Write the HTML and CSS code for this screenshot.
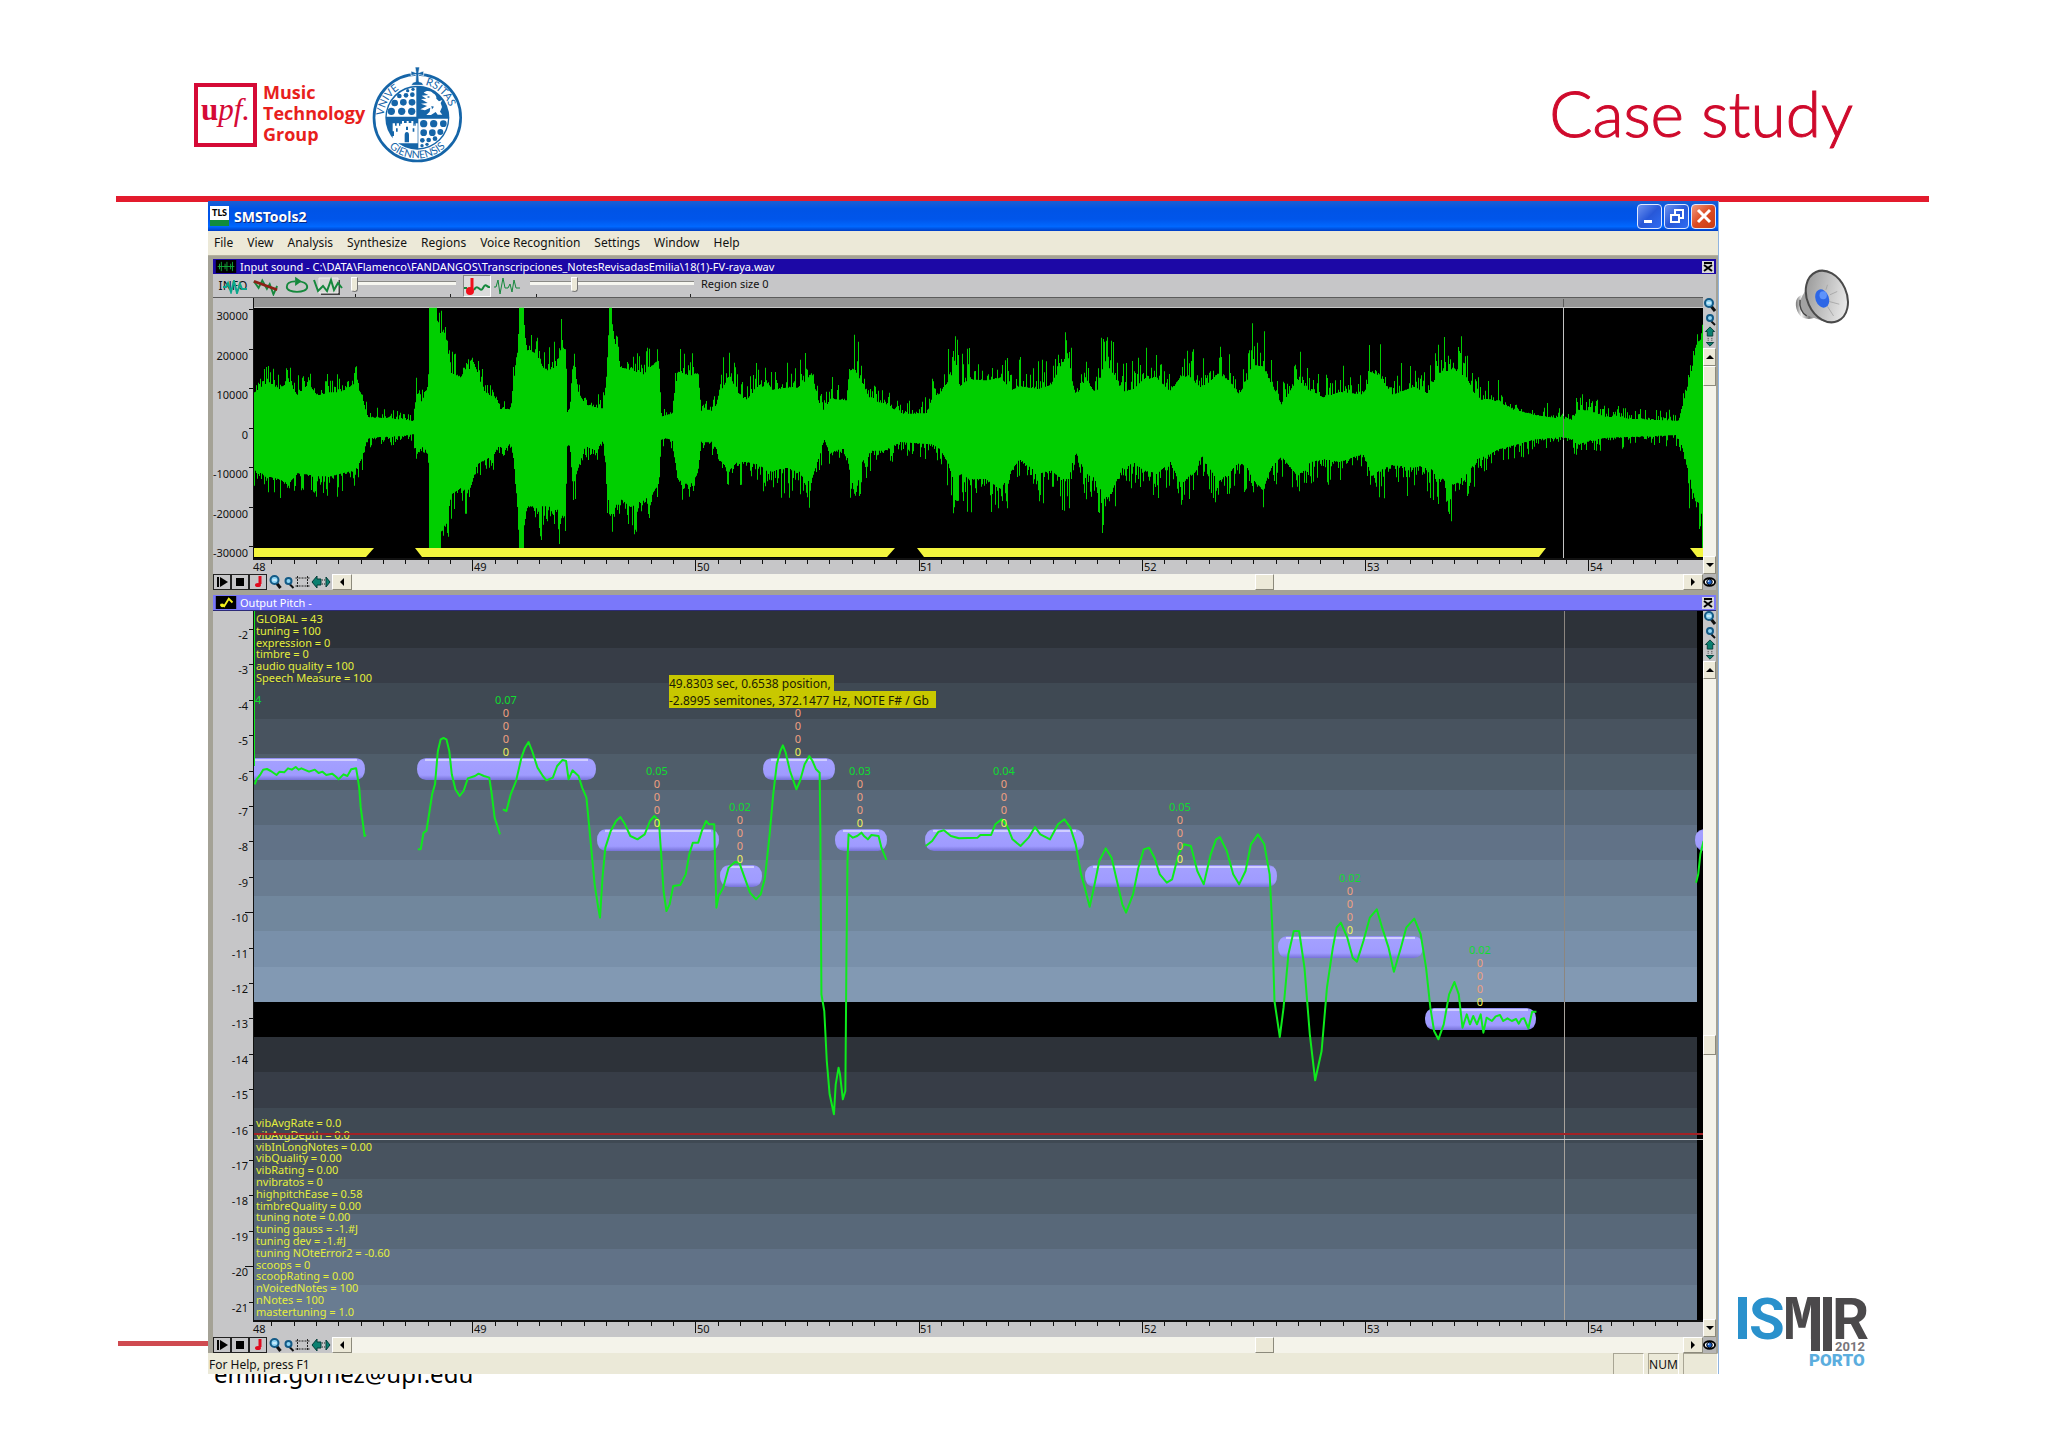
FILE: index.html
```html
<!DOCTYPE html>
<html lang="en">
<head>
<meta charset="utf-8">
<title>Case study</title>
<link rel="stylesheet" href="styles.css">
</head>
<body>
<svg class="defs" width="0" height="0" aria-hidden="true">
  <defs>
    <symbol id="zoom-in" viewBox="0 0 12 14"><path d="M7 8l4 5" stroke="#111" stroke-width="3"/><circle cx="5" cy="5" r="4" fill="#8fd4f4" stroke="#135a86" stroke-width="2"/><path d="M3 5h4" stroke="#fff"/></symbol>
    <symbol id="zoom-out" viewBox="0 0 12 14"><path d="M7 9l4 4" stroke="#111" stroke-width="2"/><circle cx="6" cy="6" r="3" fill="#8fd4f4" stroke="#135a86" stroke-width="2"/></symbol>
    <symbol id="fit-v" viewBox="0 0 12 24"><path d="M6 1l5 5H9v5H3V6H1z" fill="#0b8070" stroke="#043c38"/><path d="M4 13v4M8 13v4" stroke="#222" stroke-dasharray="1 1"/><path d="M2 18h8l-4 4z" fill="#0b8070" stroke="#043c38"/></symbol>
    <symbol id="fit-h" viewBox="0 0 20 14"><path d="M1 7l5-6v3h4v6H6v3z" fill="#0b8070" stroke="#043c38"/><path d="M11 5h4M11 9h4" stroke="#222" stroke-dasharray="1 1"/><path d="M15 2v10l4-5z" fill="#0b8070" stroke="#043c38"/></symbol>
    <symbol id="select" viewBox="0 0 14 12"><path d="M0 2h14M0 10h14M2 0v12M12 0v12" stroke="#222" stroke-dasharray="2 1" fill="none"/></symbol>
    <symbol id="play" viewBox="0 0 14 12"><path d="M3 1v10" stroke="#000" stroke-width="2"/><path d="M5 1l8 5-8 5z"/></symbol>
    <symbol id="stop" viewBox="0 0 14 12"><path d="M3 2h8v8H3z"/></symbol>
    <symbol id="note" viewBox="0 0 14 12"><path d="M9 0v8" stroke="#e00a1e" stroke-width="3"/><ellipse cx="7" cy="9" rx="3" ry="2" fill="#e00a1e"/></symbol>
    <symbol id="eye" viewBox="0 0 14 12"><ellipse cx="7" cy="6" rx="6" ry="4" fill="#fff" stroke="#000" stroke-width="2"/><circle cx="7" cy="6" r="3" fill="#1b5fc4" stroke="#000"/><circle cx="6" cy="5" r="1" fill="#cfe6ff"/></symbol>
    <symbol id="left" viewBox="0 0 8 8"><path d="M6 0v8L2 4z"/></symbol>
    <symbol id="right" viewBox="0 0 8 8"><path d="M2 0v8l4-4z"/></symbol>
    <symbol id="up" viewBox="0 0 8 8"><path d="M0 6h8L4 2z"/></symbol>
    <symbol id="down" viewBox="0 0 8 8"><path d="M0 2h8L4 6z"/></symbol>
    <linearGradient id="pill" x1="0" y1="0" x2="0" y2="1">
      <stop offset="0" stop-color="#8f8cf0"/><stop offset=".12" stop-color="#a4a0ff"/><stop offset=".78" stop-color="#9f9bff"/><stop offset="1" stop-color="#7772d8"/>
    </linearGradient>
    <linearGradient id="cone" x1="0" y1="0" x2="1" y2="1">
      <stop offset="0" stop-color="#8c8c8c"/><stop offset=".5" stop-color="#c4c4c4"/><stop offset="1" stop-color="#fafafa"/>
    </linearGradient>
    <linearGradient id="magnet" x1="0" y1="0" x2="1" y2="0">
      <stop offset="0" stop-color="#777"/><stop offset=".3" stop-color="#f4f4f4"/><stop offset=".7" stop-color="#777"/><stop offset="1" stop-color="#bbb"/>
    </linearGradient>
  </defs>
</svg>

<header class="slide-header">
  <div class="brands">
    <div class="upf"><b>u</b><i>pf.</i></div>
    <p class="mtg">Music<br>Technology<br>Group</p>
    <svg class="seal" viewBox="578 48 273 291" role="img" aria-label="Universitas Giennensis">
      <path id="seal-top" d="M613 203A101 101 0 0 1 815 203" fill="none"/>
      <path id="seal-bottom" d="M594 229A123 123 0 0 0 834 229" fill="none"/>
      <circle cx="714" cy="203" r="130" fill="#fff" stroke="#1565a8" stroke-width="8"/>
      <circle cx="714" cy="203" r="96" fill="#1565a8"/>
      <path d="M711 200V112A92 92 0 0 0 622 200zM717 206h89a92 92 0 0 1-89 89z" fill="#fff"/>
      <g fill="#1565a8">
        <circle cx="636" cy="184" r="11"/><circle cx="667" cy="184" r="11"/><circle cx="697" cy="184" r="11"/><circle cx="646" cy="159" r="10"/><circle cx="672" cy="157" r="10"/><circle cx="698" cy="157" r="10"/><circle cx="660" cy="138" r="7"/><circle cx="680" cy="136" r="7"/><circle cx="699" cy="134" r="7"/><circle cx="685" cy="122" r="5"/><circle cx="701" cy="118" r="5"/>
        <circle cx="733" cy="221" r="11"/><circle cx="763" cy="221" r="11"/><circle cx="792" cy="221" r="10"/><circle cx="733" cy="248" r="10"/><circle cx="759" cy="248" r="10"/><circle cx="783" cy="246" r="9"/><circle cx="729" cy="271" r="7"/><circle cx="748" cy="270" r="7"/><circle cx="767" cy="266" r="7"/><circle cx="728" cy="287" r="5"/><circle cx="743" cy="283" r="5"/>
        <path d="M710 68l-3-17h14l-3 17 15-5v14l-15-4 1 22c10 1 12 6 13 11h-36c1-5 4-10 13-11l1-22-15 4V63z" stroke="#fff" stroke-width="2"/>
      </g>
      <g fill="#fff">
        <path d="M640 220h7v7h5v-7h7v7h4v-6l5 0v-8h6v6h8v-6h6v6h8v-6h6v14h4v-6h-1v6h4v-7h6v60H640v-22h4v-14h-4z"/>
        <path d="M733 128c8-8 22-6 28 2 8 4 11 10 10 16l8 8 10-4-5 9 4 12-6 14 7 9h-14l-6-8-14 9h-14l10-10 2-12-16 8-14-3 20-10-18-7 20-2-20-12 16-1-14-9 20-2z"/>
      </g>
      <g fill="#1565a8"><path d="M676 255a6 8 0 0 1 13 0v22h-13zM650 235h5v10h-5zM680 230h6v10h-6zM700 235h5v10h-5z"/><path d="M745 138l8 3-8 3zM756 168l8 2-6 8z"/></g>
      <g class="seal-text">
        <text><textPath href="#seal-top" startOffset="6">VNIVE</textPath></text>
        <text><textPath href="#seal-top" startOffset="182">RSITAS</textPath></text>
        <text><textPath href="#seal-bottom" startOffset="50%" text-anchor="middle">GIENNENSIS</textPath></text>
      </g>
    </svg>
  </div>
  <h1>Case study</h1>
</header>

<main class="stage">
  <section class="window" aria-label="SMSTools2">
    <div class="titlebar">
      <span class="app-icon">TLS</span>
      <span class="app-name">SMSTools2</span>
      <button class="win-btn" aria-label="Minimize"><svg viewBox="0 0 20 20"><path d="M4 14h8v3H4z" fill="#fff"/></svg></button>
      <button class="win-btn" aria-label="Restore"><svg viewBox="0 0 20 20" fill="none" stroke="#fff" stroke-width="2"><path d="M4 9h8v7H4zM8 8V4h8v8h-3"/></svg></button>
      <button class="win-btn close" aria-label="Close"><svg viewBox="0 0 20 20" stroke="#fff" stroke-width="3"><path d="M4 4l12 12M16 4L4 16"/></svg></button>
    </div>
    <nav class="menu">
      <button>File</button><button>View</button><button>Analysis</button><button>Synthesize</button><button>Regions</button><button>Voice Recognition</button><button>Settings</button><button>Window</button><button>Help</button>
    </nav>
    <div class="workspace">
      <section class="child">
        <div class="child-title">
          <svg class="child-icon" viewBox="0 0 22 14"><path d="M0 0h22v14H0z"/><path d="M2 7h18M4 4v6M6 2v10M10 4v6M12 2v10M16 4v6M18 2v10" stroke="#12a83a"/></svg>
          <span>Input sound - C:\DATA\Flamenco\FANDANGOS\Transcripciones_NotesRevisadasEmilia\18(1)-FV-raya.wav</span>
          <button class="child-close" aria-label="Close input sound"><svg viewBox="0 0 10 10"><path d="M1 1h8M1 9l8-6M9 9L1 3" stroke="#000" stroke-width="2" fill="none"/></svg></button>
        </div>
        <div class="toolbar">
          <button class="info">INFO<svg viewBox="0 0 24 14"><path d="M0 7h3l2-4 3 9 3-11 3 12 3-9 2 5h5" fill="none" stroke="#0aa78c" stroke-width="2"/></svg></button>
          <button class="tool" aria-label="Remove curve"><svg viewBox="0 0 28 20"><path d="M1 5l5 7 4-8 5 9 3-5 4 11 4-9" fill="none" stroke="#15883c" stroke-width="2"/><path d="M1 5l25 9" stroke="#8c2216" stroke-width="3"/></svg></button>
          <button class="tool" aria-label="Loop"><svg viewBox="0 0 28 20"><path d="M12 5C4 5 3 9 3 11c0 7 22 7 22 0 0-4-5-6-10-6" fill="none" stroke="#15883c" stroke-width="2"/><path d="M12 0l7 5-7 5z" fill="#15883c"/></svg></button>
          <button class="tool scope" aria-label="Envelope"><svg viewBox="0 0 30 20"><path d="M8 4h19v15H8z" fill="#444"/><path d="M6 2h19v15H6z" fill="#d8d8d4" stroke="#eee"/><path d="M1 4l4 11 5-5 4 5 4-11 3 10 4-7 4 5" fill="none" stroke="#15883c" stroke-width="2"/></svg></button>
          <label class="slider short"><input type="range" min="0" max="100" value="0" aria-label="Horizontal smoothing"></label>
          <button class="tool pressed" aria-label="Notes"><svg viewBox="0 0 26 20"><path d="M0 12h3M10 14c4-8 6 4 9-2s4 0 7-1" fill="none" stroke="#15883c" stroke-width="2"/><path d="M8 2v12" stroke="#f0101c" stroke-width="3"/><circle cx="6" cy="15" r="4" fill="#f0101c"/></svg></button>
          <button class="tool" aria-label="Waveform"><svg viewBox="0 0 26 20"><path d="M0 11h2l2-7 2 14 3-16 2 10h3l2-4 2 8 2-12 2 8h4" fill="none" stroke="#15883c" stroke-width="1"/></svg></button>
          <label class="slider long"><input type="range" min="0" max="100" value="26" aria-label="Region size"></label>
          <output class="region">Region size 0</output>
        </div>
        <div class="panel">
          <svg id="wave-plot" class="plot" viewBox="213 297 1490 277" role="img" aria-label="Waveform">
            <path d="M213 297h1490v277H213z" fill="#c6c6c8"/>
            <path d="M254 298h1449v9H254z" fill="#969696"/>
            <path d="M213 297h1490v1H213zM1563 299h1v8h-1z" fill="#5c5c5c"/>
            <path d="M254 307h1449v251H254z"/>
            <path d="M254 307h1449v1H254z" fill="#c8c8c8"/>
            <g transform="translate(0 290) scale(1 .33333)"><path id="wave" fill="#00cf00"/></g>
            <path d="M254 548h120l-8 9H254zM415 548h480l-8 9H422zM917 548h629l-7 9H924zM1690 548h13v9h-6z" fill="#f3f53e"/>
            <path d="M1563 308h1v250h-1z" fill="#c4c4c4"/><path d="M1563 416h1v24h-1z" fill="#6e8a6e"/>
            <path d="M253 298h1v260h1450v2H253z" fill="#111"/>
            <g id="wave-axis" class="axis"></g>
          </svg>
          <div class="rail">
            <button aria-label="Zoom in vertically"><svg width="12" height="14"><use href="#zoom-in"/></svg></button>
            <button aria-label="Zoom out vertically"><svg width="12" height="14"><use href="#zoom-out"/></svg></button>
            <button aria-label="Fit vertically"><svg width="12" height="22"><use href="#fit-v"/></svg></button>
            <button class="arrow" aria-label="Scroll up"><svg width="8" height="8"><use href="#up"/></svg></button>
            <div class="track"><i class="thumb"></i></div>
            <button class="arrow low" aria-label="Scroll down"><svg width="8" height="8"><use href="#down"/></svg></button>
          </div>
          <div class="transport">
            <button class="boxed" aria-label="Play input"><svg width="14" height="12"><use href="#play"/></svg></button><button class="boxed" aria-label="Stop input"><svg width="14" height="12"><use href="#stop"/></svg></button><button class="boxed" aria-label="Input note"><svg width="14" height="12"><use href="#note"/></svg></button>
            <button aria-label="Zoom in"><svg width="13" height="14"><use href="#zoom-in"/></svg></button><button aria-label="Zoom out"><svg width="13" height="14"><use href="#zoom-out"/></svg></button><button aria-label="Select"><svg width="15" height="12"><use href="#select"/></svg></button><button aria-label="Fit"><svg width="22" height="14"><use href="#fit-h"/></svg></button>
            <button class="arrow" aria-label="Scroll left"><svg width="8" height="8"><use href="#left"/></svg></button>
            <div class="track"><i class="thumb"></i></div>
            <button class="arrow" aria-label="Scroll right"><svg width="8" height="8"><use href="#right"/></svg></button>
          </div>
          <button class="eye" aria-label="Show all"><svg width="13" height="12"><use href="#eye"/></svg></button>
        </div>
      </section>

      <section class="child pitch">
        <div class="child-title">
          <svg class="child-icon" viewBox="0 0 22 14"><path d="M0 0h22v14H0z"/><path d="M5 9l4 2 5-8 4 4" stroke="#f4f01c" stroke-width="2" fill="none"/><circle cx="7" cy="10" r="2" fill="#f4f01c"/></svg>
          <span>Output Pitch -</span>
          <button class="child-close" aria-label="Close output pitch"><svg viewBox="0 0 10 10"><path d="M1 1h8M1 9l8-6M9 9L1 3" stroke="#000" stroke-width="2" fill="none"/></svg></button>
        </div>
        <div class="panel">
          <svg id="pitch-plot" class="plot" viewBox="213 610 1490 726" role="img" aria-label="Pitch curve with note regions">
            <path d="M213 610h1490v726H213z" fill="#c6c6c8"/>
            <path d="M254 610h1449v709H254z"/>
            <g id="bands"></g>
            <path d="M1564 610h1v709h-1z" fill="#8c8680"/><path d="M1564 1001h1v318h-1z" fill="#a8a39c"/>
            <g id="notes"></g>
            <g class="curve">
              <path d="M254 610v155" class="start"/>
              <g transform="translate(200 530) scale(.3827 .33333)"><path d="M143 760L148 745 158 730 165 716 175 714 185 720 200 732 208 722 220 724 230 712 240 716 250 708 258 716 265 712 285 722 300 716 310 726 320 722 330 732 345 728 354 736 362 745 375 730 385 735 395 715 408 712 412 740 416 770 420 830 426 880 430 915 434 912"/></g>
              <g transform="translate(400 660) scale(.35714 .33333)"><path d="M50 565L58 565 66 515 74 510 90 400 98 370 106 270 114 235 122 231 130 235 138 270 145 340 155 385 167 405 178 390 190 352 210 345 220 338 235 345 250 350 257 400 265 470 280 520M288 445L298 450 310 400 325 360 340 290 350 260 360 243 370 270 385 320 400 345 410 358 428 350 440 315 455 297 465 300 472 355 483 328 500 345 510 380 522 410 530 500 545 670 555 740 560 770 567 650 575 560 590 510 605 480 617 468 630 490 645 525 665 535 685 520 700 480 712 465 725 480 730 560 738 690 746 750 755 730 765 675 785 672 800 640 810 580 820 545 835 545 845 510 857 480 865 490 880 490 882 600 886 740 892 705 905 680 920 620 938 603 950 605 965 650 980 695 997 715 1010 700 1022 650 1035 520 1045 400 1055 310 1065 270 1072 253 1080 275 1092 330 1110 385 1120 360 1133 310 1146 285 1155 300 1165 325 1175 335 1177 500 1180 1000 1188 1050 1195 1200 1203 1300 1215 1360 1220 1270 1228 1220 1232 1240 1240 1315 1247 1290 1250 900 1253 600 1256 520 1268 530 1280 525 1292 515 1300 526 1310 535 1320 522 1340 525 1348 560 1362 597"/></g>
              <g transform="translate(900 740) scale(.53571 .33333)"><path d="M48 315L60 300 72 272 82 268 95 285 110 292 145 290 150 282 170 282 178 250 190 235 200 255 210 295 225 315 240 290 252 258 262 280 280 295 295 250 307 235 318 260 328 310 338 400 345 440 354 497 362 440 372 360 384 322 395 350 405 420 415 490 422 515 435 460 445 380 455 325 465 320 475 350 485 400 498 425 508 415 520 340 530 310 543 315 555 390 567 430 580 340 590 295 597 288 610 330 622 400 633 430 645 390 655 310 668 280 680 310 690 400 695 560 699 780 709 888 716 800 725 640 735 570 745 570 755 680 765 880 775 1018 787 930 797 740 808 620 815 560 823 545 835 590 845 650 853 662 865 600 877 530 890 505 900 560 912 620 922 692 935 620 945 560 960 533 972 580 982 680 990 800 997 870 1005 895 1015 850 1025 760 1035 723 1043 760 1050 860 1058 820 1064 850 1070 825 1077 850 1084 820 1089 875 1095 830 1105 840 1112 826 1120 822 1126 840 1134 832 1142 840 1150 834 1155 848 1160 834 1165 832 1173 862 1180 812 1188 812M1486 425L1490 400 1494 340 1500 300"/></g>
            </g>
            <g id="note-labels" class="note-labels"></g>
            <text class="first-label" x="255" y="703">4</text>
            <g id="stats" class="stats"></g>
            <path d="M254 1132h1449v2H254z" fill="#a12226"/><path d="M254 1138h1449v1H254z" fill="#c3c9cf"/>
            <path d="M669 674h165v16h102v17H669z" fill="#c8c800"/>
            <g class="tip"><text x="669" y="687">49.8303 sec, 0.6538 position,</text><text x="669" y="704">-2.8995 semitones, 372.1477 Hz, NOTE F# / Gb</text></g>
            <path d="M253 610h1v709h1450v2H253z" fill="#111"/>
            <g id="pitch-axis" class="axis"></g>
          </svg>
          <div class="rail">
            <button aria-label="Zoom in vertically"><svg width="12" height="14"><use href="#zoom-in"/></svg></button>
            <button aria-label="Zoom out vertically"><svg width="12" height="14"><use href="#zoom-out"/></svg></button>
            <button aria-label="Fit vertically"><svg width="12" height="22"><use href="#fit-v"/></svg></button>
            <button class="arrow" aria-label="Scroll up"><svg width="8" height="8"><use href="#up"/></svg></button>
            <div class="track mid"><i class="thumb"></i></div>
            <button class="arrow low" aria-label="Scroll down"><svg width="8" height="8"><use href="#down"/></svg></button>
          </div>
          <div class="transport">
            <button class="boxed" aria-label="Play output"><svg width="14" height="12"><use href="#play"/></svg></button><button class="boxed" aria-label="Stop output"><svg width="14" height="12"><use href="#stop"/></svg></button><button class="boxed" aria-label="Output note"><svg width="14" height="12"><use href="#note"/></svg></button>
            <button aria-label="Zoom in"><svg width="13" height="14"><use href="#zoom-in"/></svg></button><button aria-label="Zoom out"><svg width="13" height="14"><use href="#zoom-out"/></svg></button><button aria-label="Select"><svg width="15" height="12"><use href="#select"/></svg></button><button aria-label="Fit"><svg width="22" height="14"><use href="#fit-h"/></svg></button>
            <button class="arrow" aria-label="Scroll left"><svg width="8" height="8"><use href="#left"/></svg></button>
            <div class="track"><i class="thumb"></i></div>
            <button class="arrow" aria-label="Scroll right"><svg width="8" height="8"><use href="#right"/></svg></button>
          </div>
          <button class="eye" aria-label="Show all"><svg width="13" height="12"><use href="#eye"/></svg></button>
        </div>
      </section>
    </div>
    <div class="status"><span class="hint">For Help, press F1</span><span class="cell"></span><span class="cell">NUM</span><span class="cell"></span></div>
  </section>

  <aside class="side">
    <svg class="speaker" viewBox="885 235 170 170" role="img" aria-label="Play audio">
      <path d="M895 325c-10 15-3 45 15 58 14 6 28 4 38 0l-12-70c-18 0-34 0-41 12z" fill="url(#magnet)"/>
      <path d="M925 290l-22 42c-5 18 5 40 20 44l55 20z" fill="#a2a2a2"/><path d="M903 330c-3 20 5 40 20 48" fill="none" stroke="#444" stroke-width="4"/>
      <ellipse cx="983" cy="320" rx="59" ry="80" transform="rotate(-24 983 320)" fill="url(#cone)" stroke="#4a4a4a" stroke-width="6"/>
      <path d="M980 300l5-15M992 315l22-10M990 335l30 8M985 350l18 28" stroke="#999" stroke-width="2"/>
      <ellipse cx="969" cy="326" rx="20" ry="28" transform="rotate(-20 969 326)" fill="#2e67e6"/><ellipse cx="972" cy="316" rx="11" ry="12" fill="#5e93fb"/>
    </svg>
    <svg class="ismir" viewBox="1736 1292 134 76" role="img" aria-label="ISMIR 2012 Porto">
      <g class="ismir-main"><path d="M1738 1297h9v42h-9z" fill="#2a91cc"/><text x="1749" y="1339" fill="#2a91cc">S</text><text class="ismir-m" x="1783" y="1339">M</text><text x="1832" y="1339">R</text><path d="M1811 1297h9v54h-9zM1823 1297h9v54h-9z"/></g>
      <text class="ismir-year" x="1835" y="1351">2012</text>
      <text class="ismir-city" x="1809" y="1366">PORTO</text>
    </svg>
  </aside>
</main>
<footer class="slide-footer"><a href="mailto:emilia.gomez@upf.edu">emilia.gomez@upf.edu</a></footer>
<script src="plot.js"></script>
</body>
</html>
```

FILE: styles.css
```css
* { box-sizing: border-box; }
body { margin: 0; background: #fff; font-family: "Noto Sans", sans-serif; color: #111; }
button { margin: 0; padding: 0; border: 0; background: none; font: inherit; color: inherit; display: flex; align-items: center; justify-content: center; }
svg { display: block; flex: none; }
.defs { position: absolute; }

.slide-header { display: flex; justify-content: space-between; align-items: flex-start; height: 202px; margin: 0 119px 0 116px; padding: 65px 76px 0 78px; border-bottom: 6px solid #e31b2d; }
.brands { display: flex; align-items: flex-start; }
.upf { width: 63px; height: 64px; margin-top: 18px; border: 4px solid #d50a36; color: #d50a36; font: 31px/46px "Liberation Serif", serif; text-align: center; }
.mtg { margin: 17px 0 0 6px; width: 109px; color: #e8201c; font: bold 18px/21px "Open Sans", sans-serif; }
.seal { width: 91px; height: 97px; margin-top: 1px; }
.seal-text { fill: #1565a8; font: 32px "Lato", sans-serif; }
h1 { margin: 3px 0 0; color: #cf0a2c; font: 300 64px/90px "Lato", sans-serif; -webkit-text-stroke: 1px #cf0a2c; }

.stage { display: grid; grid-template-columns: 208px minmax(0, 1fr) 329px; margin-top: -1px; position: relative; }
.stage::before { content: ""; position: absolute; left: 118px; right: 329px; bottom: 28px; height: 5px; background: #cf4a50; }
.window { grid-column: 2; position: relative; z-index: 1; background: #ece9d8; border-right: 1px solid #8fb4e0; }
.titlebar { display: flex; align-items: center; gap: 2px; height: 30px; padding: 0 2px; background: linear-gradient(#1c5fd0, #0054e6 25%, #0055ea 60%, #0068ff 85%, #003ec4); }
.app-icon { width: 19px; height: 20px; background: linear-gradient(#fff 68%, #118c3c 68%); font: 900 9px/13px "Lato", sans-serif; text-align: center; color: #000; }
.app-name { flex: 1; padding-left: 3px; color: #fff; font-size: 14px; font-weight: bold; text-shadow: 1px 1px #0a2a80; }
.win-btn { width: 25px; height: 25px; border: 1px solid #dfe9ff; border-radius: 4px; background: linear-gradient(135deg, #6d93f0, #2858d8 50%, #2f6cf2); }
.win-btn svg { width: 20px; height: 20px; }
.close { background: linear-gradient(135deg, #f09a80, #dc4a22 50%, #c83c14); }
.menu { display: flex; align-items: center; gap: 14px; height: 25px; padding: 0 6px 2px; font-size: 12px; border-bottom: 1px solid #b4b09e; }
.workspace { display: grid; gap: 5px; padding: 3px 2px 0 5px; background: #a4a296; }
.child-title { display: flex; align-items: center; gap: 3px; height: 15px; padding: 0 2px; background: #1c08a6; color: #fff; font-size: 11px; line-height: 15px; }
.child-title span { flex: 1; }
.pitch .child-title { height: 16px; background: #7a78fa; border-bottom: 1px solid #2c2a78; }
.child-icon { width: 22px; height: 13px; }
.child-close { width: 12px; height: 12px; background: #d8d8d8; }
.child-close svg { width: 10px; height: 10px; }

.toolbar { display: flex; align-items: center; height: 23px; padding-left: 4px; background: #c6c6c8; font-size: 11px; }
.info { position: relative; width: 32px; height: 20px; font-size: 12px; }
.info svg { position: absolute; left: 6px; top: 4px; width: 24px; height: 14px; }
.tool { width: 28px; height: 22px; margin-left: 3px; }
.tool svg { width: 26px; height: 20px; }
.scope svg { width: 30px; }
.pressed { background: #dcdcdc; border: 1px solid #fff; border-top-color: #888; border-left-color: #888; margin-left: 7px; }
.tool + .slider { margin-left: 9px; }
.pressed + .tool { margin-left: 2px; }
.slider { display: flex; height: 22px; align-items: flex-start; padding-top: 2px; }
.short { width: 105px; background: linear-gradient(#222, #222) 4px 19px / 1px 4px no-repeat, linear-gradient(#222, #222) 99px 19px / 1px 4px no-repeat; }
.long { width: 164px; background: linear-gradient(#222, #222) 6px 19px / 1px 4px no-repeat, linear-gradient(#222, #222) 160px 19px / 1px 4px no-repeat; }
.slider input { appearance: none; width: 100%; height: 15px; margin: 0; background: linear-gradient(#8a8a86, #8a8a86) 0 4px / 100% 1px no-repeat, linear-gradient(#f6f6f0, #f6f6f0) 0 5px / 100% 3px no-repeat; }
.slider input::-webkit-slider-thumb { appearance: none; width: 7px; height: 15px; background: #ece9d8; border: 1px solid #777; border-top-color: #fff; border-left-color: #fff; border-radius: 0 0 4px 4px; }
.region { padding-left: 7px; line-height: 16px; padding-bottom: 3px; }

.panel { display: grid; grid-template-columns: minmax(0, 1fr) 13px; grid-template-rows: auto 16px; background: #c6c6c8; }
.plot { width: 100%; height: auto; }
.rail { display: flex; flex-direction: column; align-items: stretch; padding-top: 1px; background: #c6c6c8; }
.pitch .rail { padding-top: 0; }
.rail button { flex: none; }
.arrow, .thumb { background: #ece9d8; border: 1px solid #fff; border-right-color: #8c8a7c; border-bottom-color: #8c8a7c; }
.rail .arrow { height: 18px; }
.track { flex: 1; display: flex; background: #f4f3ea; }
.rail .track { flex-direction: column; }
.rail .thumb { height: 20px; }
.mid::before { content: ""; flex: 50 0 0; }
.mid::after { content: ""; flex: 37 0 0; }
.transport { display: flex; align-items: stretch; }
.boxed { width: 18px; border: 1px solid #222; }
.transport .arrow { width: 20px; }
.transport .track::before { content: ""; flex: 902 0 0; }
.transport .track::after { content: ""; flex: 408 0 0; }
.transport .thumb { width: 19px; }
.boxed + button:not(.boxed) { margin-left: 2px; }
.eye { background: #b4b4b4; }

.axis { font-size: 11px; fill: #111; }
.axis path { stroke: #111; fill: none; }
.curve path { fill: none; stroke: #0eea1c; stroke-width: 2; stroke-linejoin: round; vector-effect: non-scaling-stroke; }
.stats, .note-labels, .first-label { font-size: 11px; }
.stats { fill: #e4ee3c; }
.note-labels { text-anchor: middle; }
.value, .first-label { fill: #10dc30; }
.zero { fill: #f0a080; }
.last { fill: #f0f05a; }
.tip { font-size: 12px; fill: #1c1c04; }

.status { display: flex; gap: 4px; height: 21px; padding: 0 0 0 1px; font-size: 12px; line-height: 24px; background: #ebe9d8; }
.hint { flex: 1; }
.cell { width: 31px; border: 1px solid #a8a594; border-right-color: #fff; border-bottom: 0; text-align: center; line-height: 22px; }
.cell:last-child { width: 35px; }

.side { display: flex; flex-direction: column; justify-content: space-between; align-items: flex-start; padding: 67px 0 6px 17px; }
.speaker { width: 57px; height: 57px; margin-left: 58px; }
.ismir { width: 134px; height: 76px; }
.ismir-main { fill: #4b494b; font: bold 58px "Roboto", sans-serif; }
.ismir-m { font: bold 63px "Liberation Mono", monospace; }
.ismir-year { fill: #77757a; font: bold 13px "Roboto", sans-serif; }
.ismir-city { fill: #5badde; font: 900 17px "Roboto", sans-serif; }

.slide-footer { margin-top: -19px; padding: 0 214px 36px; font-size: 24px; line-height: 38px; }
.slide-footer a { color: #000; text-decoration: none; }
```

FILE: plot.js
```js
const NS = 'http://www.w3.org/2000/svg';
const add = (parent, tag, attrs, text) => {
  const el = document.createElementNS(NS, tag);
  for (const k in attrs) el.setAttribute(k, attrs[k]);
  if (text !== undefined) el.textContent = text;
  document.getElementById(parent).appendChild(el);
};

// Envelope points: position, upper edge, lower edge. Each block has its own time scale.
const blocks = [
  { origin: 250, scale: 2.24, points: [
    [9,290,560],[40,255,580],[65,280,590],[85,255,605],[105,298,570],[130,262,575],[150,300,580],[175,290,580],[205,290,570],[235,258,560],[250,300,520],[262,372,455],[300,375,448],[340,380,447],[365,385,440],[372,290,510],[385,325,480],[397,270,500],[400,200,560],[401,53,776],[412,53,776],[425,90,770],[440,170,730],[450,225,640],[470,240,620],[490,215,625],[497,180,600],[508,220,540],[520,280,530],[545,310,510],[555,345,480],[570,345,490],[583,350,470],[590,250,520],[598,160,680],[602,53,776],[610,53,776],[620,150,680],[640,160,680],[660,220,680],[685,205,680],[698,130,710],[706,160,715],[710,355,475],[716,340,480],[722,205,610],[735,290,550],[750,330,480],[775,340,495],[790,345,460],[797,250,560],[804,53,700],[812,80,710],[825,205,650],[850,215,680],[880,230,660],[900,200,640],[915,185,600],[921,370,450],[945,360,460],[957,220,590],[985,235,610],[1003,225,560],[1010,350,465],[1040,345,470],[1050,290,530],[1073,220,570],[1090,280,540],[1110,310,540],[1140,255,550],[1160,275,575],[1200,265,560],[1230,265,575],[1257,215,605],[1270,300,540],[1285,365,460],[1297,305,505],[1335,310,490],[1342,210,570],[1355,205,660],[1370,250,540],[1390,310,500],[1420,320,500],[1450,350,475],[1454,358,472]] },
  { origin: 900, scale: 1.889, points: [
    [0,358,470],[50,355,475],[60,300,478],[75,285,495],[95,230,560],[101,190,620],[103,150,690],[106,190,620],[112,260,580],[130,235,600],[160,240,600],[190,230,635],[210,275,570],[225,260,530],[260,270,580],[285,255,570],[305,180,600],[318,165,600],[330,300,500],[350,235,580],[370,290,600],[385,175,670],[400,210,640],[420,280,560],[440,270,540],[460,235,570],[485,232,580],[510,280,540],[530,225,620],[550,235,580],[570,270,520],[600,215,610],[620,240,580],[640,290,540],[655,240,560],[665,185,600],[685,190,640],[700,250,560],[720,325,520],[750,235,590],[775,280,540],[800,300,530],[830,280,540],[875,290,510],[890,210,590],[905,225,570],[930,290,550],[970,262,560],[995,290,550],[1015,215,590],[1045,200,620],[1070,230,580],[1090,310,530],[1110,305,515],[1130,315,495],[1160,345,480],[1200,362,460],[1250,375,452],[1270,378,460],[1278,345,480],[1300,345,465],[1330,367,455],[1400,378,450],[1470,382,445],[1480,310,510],[1495,200,620],[1505,100,680],[1517,110,700]] }
];
const env = blocks.flatMap(b => b.points.map(p => [b.origin + p[0] / b.scale, p[1], p[2]]));
let seed = 7;
const rnd = () => (seed = (seed * 16807) % 2147483647) / 2147483647;
let upper = '', lower = '', i = 0;
for (let x = 254; x < 1703; x++) {
  while (i < env.length - 2 && env[i + 1][0] < x) i++;
  const a = env[i], b = env[i + 1];
  const t = Math.max(0, Math.min(1, (x - a[0]) / (b[0] - a[0])));
  const top = a[1] + (b[1] - a[1]) * t, bot = a[2] + (b[2] - a[2]) * t;
  // Later notes are rougher than the opening ones
  const rough = x > 710 ? 0.5 : 0.32;
  const spike = amp => (Math.pow(rnd(), 4) - 0.3) * (amp * rough + 18);
  const y1 = top < 70 ? 53 : Math.max(53, top - spike(415 - top));
  const y2 = bot > 765 ? 776 : Math.min(776, bot + spike(bot - 415));
  upper += `L${x} ${y1.toFixed(0)}h1`;
  lower = `L${x + 1} ${y2.toFixed(0)}h-1` + lower;
}
document.getElementById('wave').setAttribute('d', 'M254 415' + upper + lower + 'Z');

// Time rulers
const ruler = (id, y) => {
  let d = '';
  for (let k = 1; k < 65; k++) {
    const x = Math.round(249 + k * 22.32) + 0.5;
    d += `M${x} ${y}v${k % 10 ? 5 : 12}`;
  }
  add(id, 'path', { d });
  add(id, 'text', { x: 253, y: y + 12 }, '48');
  for (let s = 49; s < 55; s++) add(id, 'text', { x: Math.round(474 + (s - 49) * 223.2), y: y + 12 }, s);
};
ruler('wave-axis', 559);
ruler('pitch-axis', 1320);

for (let k = 0; k < 7; k++) {
  const y = Math.round(309 + k * 39.5);
  add('wave-axis', 'path', { d: `M249 ${y + 0.5}h5` });
  add('wave-axis', 'text', { x: 248, y: y + 11, 'text-anchor': 'end' }, 30000 - k * 10000);
}
for (let k = 0; k < 20; k++) {
  const y = Math.round(628 + k * 35.4);
  add('pitch-axis', 'path', { d: `M${k === 18 || k === 8 ? 245 : 249} ${y + 0.5}h${k === 18 || k === 8 ? 9 : 5}` });
  add('pitch-axis', 'text', { x: 248, y: y + 10, 'text-anchor': 'end' }, -2 - k);
}

// Semitone bands, darkest to lightest in each octave
const shades = ['#2d3239', '#373d47', '#3f4953', '#48535f', '#4f5d6a', '#586879', '#617287', '#697c91', '#71879d', '#7990aa', '#8299b3'];
const band = (y, h, fill) => add('bands', 'path', { d: `M254 ${y}h1443v${h}H254z`, fill });
shades.forEach((c, k) => {
  const y = k ? Math.round(647 + (k - 1) * 35.4) : 610;
  band(y, Math.round(647 + k * 35.4) - y, c);
});
shades.slice(0, 8).forEach((c, k) => {
  const y = Math.round(1036 + k * 35.4);
  band(y, Math.round(1036 + (k + 1) * 35.4) - y, c);
});

// Notes: left, right, top, label centre, label
const notes = [
  [240, 365, 757], [417, 596, 757, 506, '0.07'], [597, 719, 828, 657, '0.05'], [720, 762, 864, 740, '0.02'],
  [763, 835, 757, 798, ''], [835, 887, 828, 860, '0.03'], [925, 1084, 828, 1004, '0.04'],
  [1085, 1277, 864, 1180, '0.05'], [1278, 1423, 935, 1350, '0.02'], [1425, 1536, 1007, 1480, '0.02'], [1695, 1720, 828]
];
for (const [l, r, y, cx, label] of notes) {
  const x = Math.max(l, 254);
  add('notes', 'path', { d: l < 254
    ? `M254 ${y}H${r - 9}q9 1 9 11t-9 11H254z`
    : `M${l + 9} ${y}H${r - 9}q9 1 9 11t-9 11H${l + 9}q-9-1-9-11t9-11z`, fill: 'url(#pill)' });
  add('notes', 'path', { d: `M${x + (l < 254 ? 0 : 8)} ${y + 1}H${r - 8}v2H${x + (l < 254 ? 0 : 8)}z`, fill: '#d0ceff' });
  if (!cx) continue;
  if (label) add('note-labels', 'text', { x: cx, y: y - 54, class: 'value' }, label);
  for (let k = 0; k < 4; k++) add('note-labels', 'text', { x: cx, y: y - 41 + k * 13, class: k < 3 ? 'zero' : 'last' }, '0');
}

const list = (lines, y) => lines.forEach((t, k) => add('stats', 'text', { x: 256, y: Math.round(y + k * 11.8) }, t));
list(['GLOBAL = 43', 'tuning = 100', 'expression = 0', 'timbre = 0', 'audio quality = 100', 'Speech Measure = 100'], 622);
list(['vibAvgRate = 0.0', 'vibAvgDepth = 0.0', 'vibInLongNotes = 0.00', 'vibQuality = 0.00', 'vibRating = 0.00', 'nvibratos = 0', 'highpitchEase = 0.58', 'timbreQuality = 0.00', 'tuning note = 0.00', 'tuning gauss = -1.#J', 'tuning dev = -1.#J', 'tuning NOteError2 = -0.60', 'scoops = 0', 'scoopRating = 0.00', 'nVoicedNotes = 100', 'nNotes = 100', 'mastertuning = 1.0'], 1126);
```
